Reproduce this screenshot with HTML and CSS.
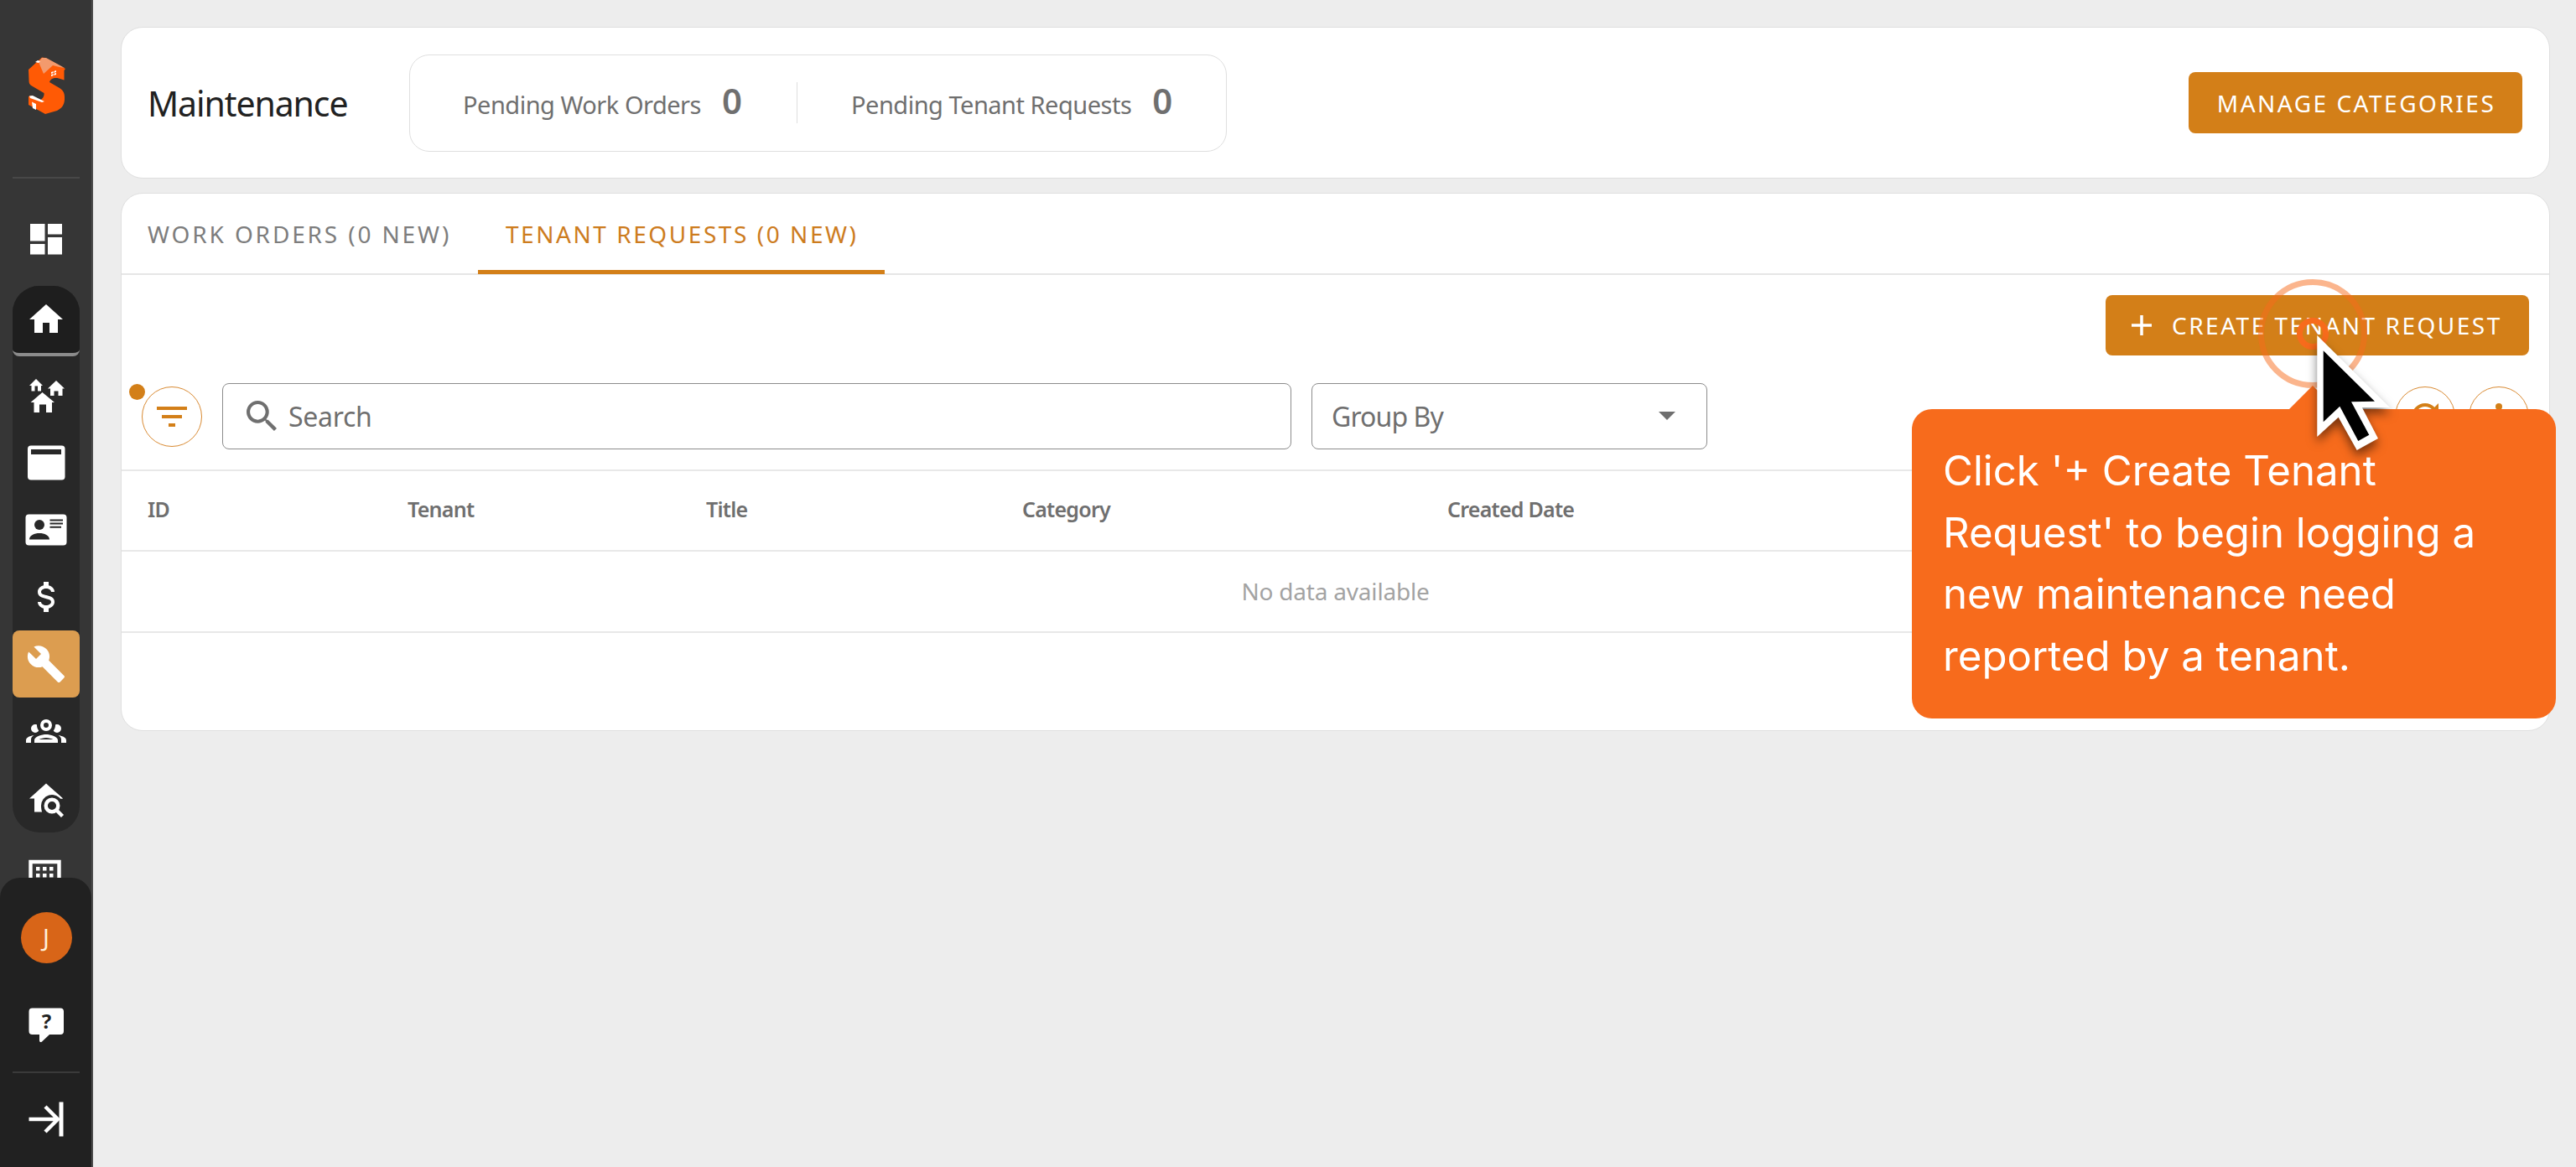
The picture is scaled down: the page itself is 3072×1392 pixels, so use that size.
FILE: index.html
```html
<!DOCTYPE html>
<html lang="en">

<head>
    <meta charset="UTF-8">
    <meta name="viewport" content="width=device-width, initial-scale=1.0">
    <title>Maintenance</title>
    <link rel="stylesheet" href="styles.css">
</head>

<body>

    <div class="app">
        <aside class="sidebar">
            <nav class="nav">
                <div class="logo">
                    <svg width="46" height="70" viewBox="33 67 46 70">
                        <path fill="#ff5a05" d="M34 83L50 68.5L54 69L78 82L76.5 84V95.5L70 93.5C65 92 60 94 59 98L71 105C76 108 77.5 112 77 119C76.500 125 74 129 68 132L54 136L34 125V115L38 114L47 120C51 118 53 115 52.500 111L38 102.500C35 101 34.500 99 34.500 96Z" />
                        <path fill="#f39a6d" d="M50 69L55 69L77 81L71 80L63 78L52 88L46 74Z" />
                        <path fill="#fff" d="M42 74L45 72L48 73L46 75ZM61 86L67 84V89L61 91ZM35 114.500L39 114L53 121L50 122L36 117ZM38 121.500L43 124V131L39 129Z" />
                        <path stroke="#ff5a05" d="M64 84V91M61 88.500L67 86.500" />
                    </svg>
                </div>
                <hr>
                <a class="nav-item dashboard">
                    <svg class="icon" viewBox="0 0 48 48"><path d="M5 6H22.500V26.500H5ZM5 30H22.500V42.500H5ZM26 6H43V18.500H26ZM26 22H43V42.500H26Z" /></svg>
                </a>
                <div class="nav-group">
                    <a class="nav-item home">
                        <svg class="icon" viewBox="0 0 24 24"><path d="M10,20V14H14V20H19V12H22L12,3L2,12H5V20H10Z" /></svg>
                    </a>
                    <a class="nav-item">
                        <svg class="icon" viewBox="0 0 48 48"><path d="M12 4L20 12H18V18.500H14V12.500H10.500V18.500H6.500V12H4ZM36 6L46 15.500H43.500V24H38.500V18.500H33.500V24H29V15.500H26ZM19.500 20L34 32H31V44H24V34.500H16V44H9.500V32H5.500Z" /></svg>
                    </a>
                    <a class="nav-item">
                        <svg class="icon" viewBox="0 0 48 48"><rect x="2" y="3.500" width="44.500" height="41" rx="4" /><rect class="cut" x="6" y="8" width="36" height="6" /></svg>
                    </a>
                    <a class="nav-item">
                        <svg class="icon" viewBox="0 0 48 48">
                            <rect x="-.5" y="5.500" width="49" height="37" rx="4" />
                            <circle class="cut" cx="16" cy="18" r="6" />
                            <path class="cut" d="M4 35.500C4 25.500 28 25.500 28 35.500ZM28.500 11.500H44V13.500H28.500ZM28.500 15.500H44V17.500H28.500ZM28.500 19.700H42V21.700H28.500Z" />
                        </svg>
                    </a>
                    <a class="nav-item">
                        <svg class="icon" viewBox="0 0 24 24"><path d="M7,15H9C9,16.08 10.37,17 12,17C13.63,17 15,16.08 15,15C15,13.9 13.96,13.5 11.76,12.97C9.64,12.44 7,11.78 7,9C7,7.21 8.47,5.69 10.5,5.18V3H13.5V5.18C15.53,5.69 17,7.21 17,9H15C15,7.92 13.63,7 12,7C10.37,7 9,7.92 9,9C9,10.1 10.04,10.5 12.24,11.03C14.36,11.56 17,12.22 17,15C17,16.79 15.53,18.31 13.5,18.82V21H10.5V18.82C8.47,18.31 7,16.79 7,15Z" /></svg>
                    </a>
                    <a class="nav-item active">
                        <svg class="icon" viewBox="0 0 24 24"><path d="M22.7,19L13.6,9.9C14.5,7.6 14,4.9 12.1,3C10.1,1 7.1,0.6 4.7,1.7L9,6L6,9L1.6,4.7C0.4,7.1 0.9,10.1 2.9,12.1C4.8,14 7.5,14.5 9.8,13.6L18.9,22.7C19.3,23.1 19.9,23.1 20.3,22.7L22.6,20.4C23.1,20 23.1,19.3 22.7,19Z" /></svg>
                    </a>
                    <a class="nav-item">
                        <svg class="icon" viewBox="0 0 24 24"><path d="M12,5A3.5,3.5 0 0,0 8.5,8.5A3.5,3.5 0 0,0 12,12A3.5,3.5 0 0,0 15.5,8.5A3.5,3.5 0 0,0 12,5M12,7A1.5,1.5 0 0,1 13.5,8.5A1.5,1.5 0 0,1 12,10A1.5,1.5 0 0,1 10.5,8.5A1.5,1.5 0 0,1 12,7M5.5,8A2.5,2.5 0 0,0 3,10.5C3,11.44 3.53,12.25 4.29,12.68C4.65,12.88 5.06,13 5.5,13C5.94,13 6.35,12.88 6.71,12.68C7.08,12.47 7.39,12.17 7.62,11.81C6.89,10.86 6.5,9.7 6.5,8.5C6.5,8.41 6.5,8.31 6.5,8.22C6.2,8.08 5.86,8 5.5,8M18.5,8C18.14,8 17.8,8.08 17.5,8.22C17.5,8.31 17.5,8.41 17.5,8.5C17.5,9.7 17.11,10.86 16.38,11.81C16.5,12 16.63,12.15 16.78,12.3C16.94,12.45 17.1,12.58 17.29,12.68C17.65,12.88 18.06,13 18.5,13C18.94,13 19.35,12.88 19.71,12.68C20.47,12.25 21,11.44 21,10.5A2.5,2.5 0 0,0 18.5,8M12,14C9.66,14 5,15.17 5,17.5V19H19V17.5C19,15.17 14.34,14 12,14M4.71,14.55C2.78,14.78 0,15.76 0,17.5V19H3V17.07C3,16.06 3.69,15.22 4.71,14.55M19.29,14.55C20.31,15.22 21,16.06 21,17.07V19H24V17.5C24,15.76 21.22,14.78 19.29,14.55M12,16C13.53,16 15.24,16.5 16.23,17H7.77C8.76,16.5 10.47,16 12,16Z" /></svg>
                    </a>
                    <a class="nav-item">
                        <svg class="icon" viewBox="0 0 48 48">
                            <path d="M24 6.500L44 24.500H38V40.500H10V24.500H4Z" />
                            <path class="cut" d="M18 33A13 13 0 0 1 42 26L46 48H21.500C19 41 18 37 18 33Z" />
                            <path d="M35 16.400L44 24.500H41A12.500 12.500 0 0 0 33 20Z" />
                            <circle class="line" cx="31" cy="33" r="7.300" />
                            <path class="line" d="M36 38L43.500 45.500" />
                        </svg>
                    </a>
                </div>
                <a class="nav-item building">
                    <svg class="icon" viewBox="0 0 48 48"><path class="line" d="M5.500 48V8H39.500V48" /><path d="M12 14H16.500V18.500H12ZM20 14H24.500V18.500H20ZM28 14H32.500V18.500H28ZM12 22H16.500V26.500H12ZM20 22H24.500V26.500H20ZM28 22H32.500V26.500H28Z" /></svg>
                </a>
            </nav>
            <div class="side-footer">
                <div class="avatar">J</div>
                <svg class="icon help" viewBox="0 0 48 48">
                    <path d="M7.500 3.500H41A4 4 0 0 1 45 7.500V31A4 4 0 0 1 41 35H28L19 43.500Q16 45 16 42V35H7.500A4 4 0 0 1 3.500 31V7.500A4 4 0 0 1 7.500 3.500Z" />
                    <text class="help-mark" x="24.500" y="27.500" text-anchor="middle">?</text>
                </svg>
                <hr>
                <svg class="icon" viewBox="0 0 48 48"><path class="line" d="M3.500 24H38M23 9L38 24L23 39" /><path d="M39.500 3.500H44.500V44.500H39.500Z" /></svg>
            </div>
        </aside>

        <main class="main">
            <header class="card header">
                <h1>Maintenance</h1>
                <div class="stats">
                    <div class="stat"><span>Pending Work Orders</span><b>0</b></div>
                    <div class="stat"><span>Pending Tenant Requests</span><b>0</b></div>
                </div>
                <button class="btn manage">MANAGE CATEGORIES</button>
            </header>

            <section class="card content">
                <div class="tabs">
                    <div class="tab">WORK ORDERS (0 NEW)</div>
                    <div class="tab selected">TENANT REQUESTS (0 NEW)</div>
                </div>

                <div class="actions">
                    <button class="btn create">
                        <svg width="24" height="24" viewBox="0 0 24 24"><path d="M12 0V24M0 12H24" stroke="#fff" stroke-width="3.500" /></svg>
                        <span>CREATE TENANT REQUEST</span>
                        <span class="ripple"></span>
                        <span class="ripple small"></span>
                    </button>
                </div>

                <div class="filters">
                    <div class="round filter">
                        <svg width="48" height="48" viewBox="0 0 24 24"><path d="M6,13H18V11H6M3,6V8H21V6M10,18H14V16H10V18Z" /></svg>
                        <span class="dot"></span>
                    </div>
                    <div class="field search">
                        <svg width="36" height="36" viewBox="3 3 17.500 17.500"><path d="M9.5,3A6.5,6.5 0 0,1 16,9.5C16,11.11 15.41,12.59 14.44,13.73L14.71,14H15.5L20.5,19L19,20.5L14,15.5V14.71L13.73,14.44C12.59,15.41 11.11,16 9.5,16A6.5,6.5 0 0,1 3,9.5A6.5,6.5 0 0,1 9.5,3M9.5,5C7,5 5,7 5,9.5C5,12 7,14 9.5,14C12,14 14,12 14,9.5C14,7 12,5 9.5,5Z" /></svg>
                        <span>Search</span>
                    </div>
                    <div class="field group-by">
                        <span>Group By</span>
                        <svg width="20" height="10" viewBox="0 0 20 10"><path d="M0 0H20L10 10Z" /></svg>
                    </div>
                    <div class="round refresh">
                        <svg width="48" height="48" viewBox="0 0 24 24"><path d="M17.65,6.35C16.2,4.9 14.21,4 12,4A8,8 0 0,0 4,12A8,8 0 0,0 12,20C15.73,20 18.84,17.45 19.73,14H17.65C16.83,16.33 14.61,18 12,18A6,6 0 0,1 6,12A6,6 0 0,1 12,6C13.66,6 15.14,6.69 16.22,7.78L13,11H20V4L17.65,6.35Z" /></svg>
                    </div>
                    <div class="round">
                        <svg width="48" height="48" viewBox="0 0 24 24"><circle cx="12" cy="6" r="2" /><circle cx="12" cy="12" r="2" /><circle cx="12" cy="18" r="2" /></svg>
                    </div>
                </div>

                <div class="table">
                    <div class="row head">
                        <span>ID</span>
                        <span>Tenant</span>
                        <span>Title</span>
                        <span>Category</span>
                        <span>Created Date</span>
                    </div>
                    <div class="row empty">No data available</div>
                </div>
            </section>
        </main>

        <div class="tooltip">Click '+ Create Tenant<br>Request' to begin logging a<br>new maintenance need<br>reported by a tenant.</div>
        <svg class="cursor" width="120" height="160" viewBox="2750 390 120 160">
            <path fill="#fff" d="M2763.300 400V521L2788.700 497.700L2810.700 537L2836 523L2817 486.300H2850.300Z" />
            <path d="M2770.700 418.300V503.300L2790.300 484.700L2812.300 526L2825.300 518.700L2804 479.300L2832 478.700Z" />
        </svg>
    </div>

</body>

</html>
```
FILE: styles.css
```css
* {
    box-sizing: border-box;
}

body {
    margin: 0;
    overflow: hidden;
    font-family: 'Noto Sans', 'Open Sans', sans-serif;
    background-color: #ededed;
    color: #6f6f6f;
}

.app {
    position: relative;
    display: flex;
    height: 100vh;
}

/* sidebar */
.sidebar {
    width: 111px;
    height: 100%;
    display: flex;
    flex-direction: column;
    background-color: #363636;
    border-right: 2px solid #4d4d4d;
}

.nav {
    height: 1047px;
    padding: 0 14px 0 15px;
    overflow: hidden;
}

.logo {
    height: 211px;
    padding: 67px 0 0 18px;
}

hr {
    width: 80px;
    height: 2px;
    margin: 0;
    border: none;
    background-color: #484848;
}

.nav-item {
    height: 80px;
    display: flex;
    justify-content: center;
    align-items: center;
}

.dashboard {
    margin: 32px 0 16px;
}

.nav-group {
    height: 652px;
    background-color: #282828;
    border-radius: 32px;
}

.home {
    height: 84px;
    margin-bottom: 7px;
    background-color: #1e1e1e;
    border-bottom: 4px solid #8c8c8c;
    border-radius: 32px 32px 8px 8px;
}

.active {
    background-color: #dc9d50;
    border-radius: 8px;
}

.building {
    margin-top: 11px;
}

.icon {
    width: 48px;
    height: 48px;
    fill: #fff;
    overflow: visible;
    flex-shrink: 0;
}

.cut {
    fill: #282828;
}

.line {
    fill: none;
    stroke: #fff;
    stroke-width: 4.4px;
}

.side-footer {
    flex: 1;
    display: flex;
    flex-direction: column;
    align-items: center;
    padding-left: 1px;
    background-color: #212121;
    border-radius: 24px 24px 0 0;
}

.side-footer hr {
    margin: 31px 0;
    background-color: #3a3a3a;
}

.avatar {
    width: 61px;
    height: 61px;
    margin-top: 41px;
    border-radius: 50%;
    background-color: #d86518;
    color: #fff0d8;
    font-size: 29px;
    line-height: 60px;
    text-align: center;
}

.help {
    margin-top: 50px;
}

.help-mark {
    fill: #212121;
    font-size: 24px;
    font-weight: bold;
}

/* cards */
.main {
    flex: 1;
    display: flex;
    flex-direction: column;
    gap: 17px;
    padding: 32px 31px 0 33px;
}

.card {
    background-color: #fff;
    border: 1px solid #dfdfdf;
    border-radius: 26px;
}

.header {
    height: 181px;
    display: flex;
    align-items: center;
    padding: 0 32px 0 31px;
}

h1 {
    width: 312px;
    margin: 0;
    font-size: 41px;
    font-weight: normal;
    letter-spacing: -1.1px;
    color: #212121;
}

.stats {
    width: 975px;
    height: 116px;
    display: flex;
    align-items: center;
    border: 1px solid #dfdfdf;
    border-radius: 24px;
}

.stat {
    height: 49px;
    display: flex;
    align-items: baseline;
    gap: 25px;
    padding-left: 64px;
    font-size: 29px;
    line-height: 43px;
    letter-spacing: -0.5px;
}

.stat:first-child {
    width: 462px;
    padding-left: 63px;
    border-right: 1px solid #dfdfdf;
}

.stat b {
    font-size: 42px;
    font-weight: 600;
}

.btn {
    height: 73px;
    border: none;
    border-radius: 8px;
    background-color: #d37f18;
    color: #fff;
    font-family: inherit;
    font-size: 28px;
    letter-spacing: 2.5px;
}

.manage {
    width: 398px;
    margin-left: auto;
    padding: 1px 0 0 2px;
}

/* tabs */
.content {
    height: 642px;
}

.tabs {
    height: 97px;
    display: flex;
    border-bottom: 2px solid #e6e6e6;
}

.tab {
    width: 425px;
    height: 96px;
    padding-left: 31px;
    font-size: 28px;
    line-height: 96px;
    letter-spacing: 2.85px;
    color: #7d7d7d;
    white-space: nowrap;
}

.selected {
    width: 485px;
    padding-left: 33px;
    letter-spacing: 2.55px;
    color: #cd7c1e;
    border-bottom: 5px solid #d37f18;
}

.actions {
    display: flex;
    justify-content: flex-end;
    padding: 24px 24px 0;
}

.create {
    position: relative;
    width: 505px;
    height: 72px;
    display: flex;
    align-items: center;
    gap: 24px;
    padding: 0 0 0 31px;
}

/* click indicator */
.ripple {
    position: absolute;
    left: 182px;
    top: -19px;
    width: 130px;
    height: 130px;
    border: 7px solid rgba(247, 107, 28, 0.5);
    border-radius: 50%;
}

.small {
    left: 228px;
    top: 27px;
    width: 38px;
    height: 38px;
    border-color: #f76b1c;
}

.filters {
    height: 79px;
    display: flex;
    align-items: center;
    margin: 33px 24px 24px 24px;
}

.round {
    position: relative;
    width: 72px;
    height: 72px;
    display: flex;
    justify-content: center;
    align-items: center;
    border: 1.5px solid #d98a32;
    border-radius: 50%;
    fill: #d37f18;
}

.dot {
    position: absolute;
    left: -16px;
    top: -4px;
    width: 19px;
    height: 19px;
    border-radius: 50%;
    background-color: #d37f18;
}

.field {
    height: 79px;
    display: flex;
    align-items: center;
    border: 1px solid #8c8c8c;
    border-radius: 8px;
    font-size: 32px;
    fill: #6f6f6f;
}

.search {
    width: 1275px;
    margin: 0 24px;
    padding: 0 28px 1px;
    gap: 14px;
    letter-spacing: -0.3px;
}

.group-by {
    width: 472px;
    justify-content: space-between;
    padding: 0 37px 1px 23px;
    letter-spacing: -0.9px;
}

.refresh {
    margin-left: auto;
    margin-right: 16px;
}

/* table */
.row {
    height: 97px;
    border-bottom: 2px solid #e8e8e8;
    line-height: 94px;
}

.head {
    display: grid;
    grid-template-columns: 310px 356px 377px 507px 1fr;
    height: 98px;
    border-top: 2px solid #e8e8e8;
    padding-left: 31px;
    font-size: 25px;
    font-weight: 600;
    line-height: 91px;
    letter-spacing: -0.75px;
}

.empty {
    font-size: 28px;
    letter-spacing: -0.2px;
    text-align: center;
    color: #a3a3a3;
}

/* guide */
.tooltip {
    position: absolute;
    left: 2280px;
    top: 488px;
    width: 768px;
    height: 369px;
    padding: 37px 37px 0;
    border-radius: 24px;
    background-color: #f76b1c;
    color: #fff;
    font-family: Inter, sans-serif;
    font-size: 49.2px;
    line-height: 73.7px;
    white-space: nowrap;
}

.tooltip::before {
    content: "";
    position: absolute;
    left: 449px;
    top: -28px;
    border: 29px solid transparent;
    border-top: none;
    border-bottom-color: #f76b1c;
}

.cursor {
    position: absolute;
    left: 2750px;
    top: 390px;
    overflow: visible;
    filter: drop-shadow(0 7px 6px rgba(0, 0, 0, 0.5));
}
```
